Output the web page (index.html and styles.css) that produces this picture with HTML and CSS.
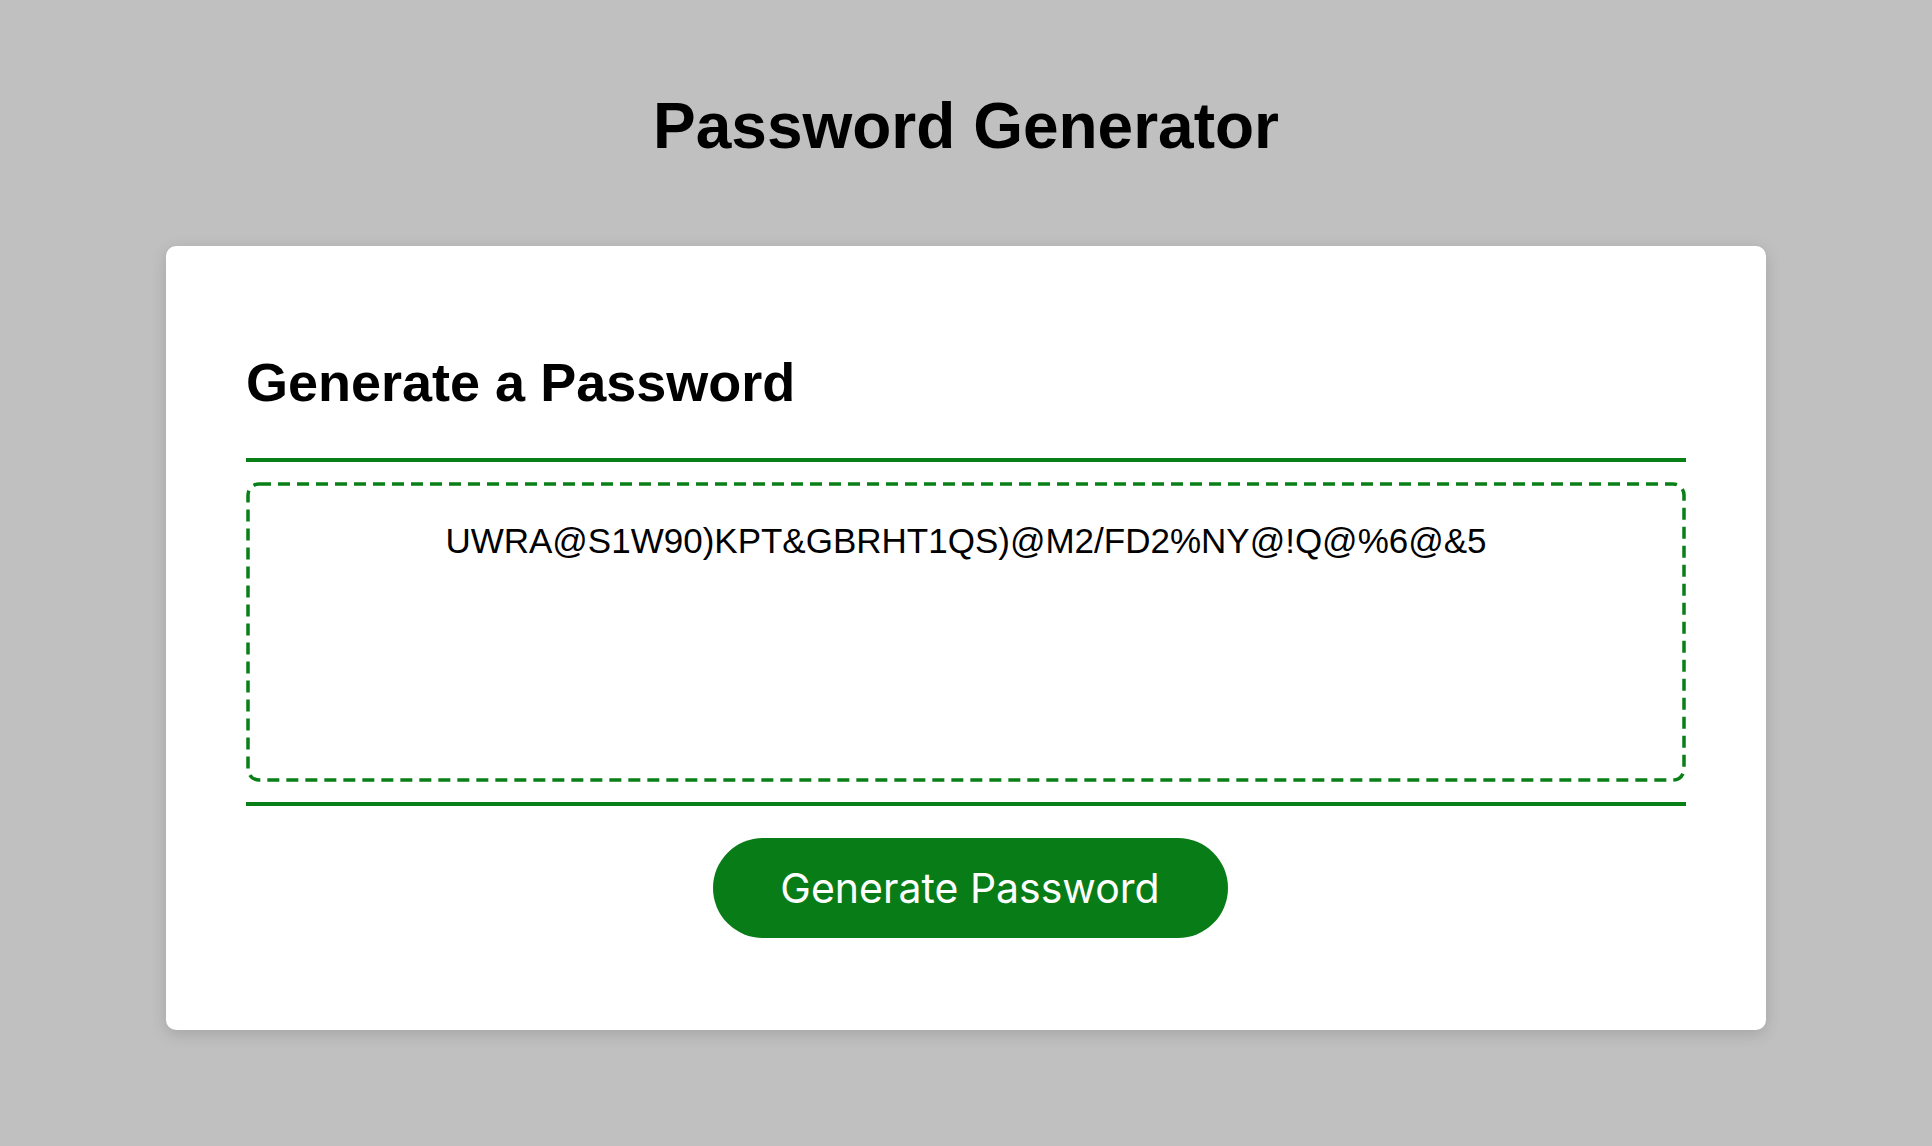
FILE: index.html
```html
<!DOCTYPE html>
<html lang="en">
<head>
<meta charset="UTF-8">
<title>Password Generator</title>
<link rel="stylesheet" href="styles.css">
</head>
<body>
<div class="wrapper">
  <header class="page-header">
    <h1 class="title">Password Generator</h1>
  </header>
  <div class="card">
    <div class="card-header">
      <h2 class="card-title">Generate a Password</h2>
    </div>
    <div class="card-body">
      <div class="password-box">
        <textarea readonly class="password" id="password" aria-label="Generated Password">UWRA@S1W90)KPT&amp;GBRHT1QS)@M2/FD2%NY@!Q@%6@&amp;5</textarea>
        <svg class="dash-frame" width="1440" height="300" viewBox="0 0 1440 300" aria-hidden="true">
          <rect x="2" y="2" width="1436" height="296" rx="11" ry="11" fill="none" stroke="#087f17" stroke-width="3.5" stroke-dasharray="12 7"></rect>
        </svg>
      </div>
    </div>
    <div class="card-footer">
      <button class="btn" id="generate">Generate Password</button>
    </div>
  </div>
</div>
</body>
</html>
```

FILE: styles.css
```css
* {
  box-sizing: border-box;
}

html, body {
  margin: 0;
  padding: 0;
}

body {
  background: #c0c0c0;
  font-family: "Liberation Sans", Arial, Helvetica, sans-serif;
  color: #000;
  min-height: 1146px;
}

.wrapper {
  padding-top: 89px;
}

.page-header {
  text-align: center;
  margin-bottom: 83px;
}

.title {
  margin: 0;
  font-size: 64px;
  line-height: 74px;
  font-weight: 700;
  color: #000;
}

.card {
  background: #fff;
  max-width: 1600px;
  margin: 0 auto;
  border-radius: 10px;
  box-shadow: rgba(0, 0, 0, 0.15) 0 4px 16px 0;
  padding: 60px 80px;
}

.card-header::after,
.card-footer::before {
  content: "";
  display: block;
  width: 100%;
  height: 4px;
  background: #087f17;
}

.card-title {
  margin: 45px 0;
  font-size: 54px;
  line-height: 62px;
  font-weight: 700;
  color: #000;
}

.card-body {
  padding: 20px 0;
}

.password-box {
  position: relative;
  height: 300px;
}

.password {
  display: block;
  width: 100%;
  height: 300px;
  margin: 0;
  padding: 36px 34px 0;
  border: none;
  border-radius: 12px;
  font-family: "Liberation Sans", Arial, Helvetica, sans-serif;
  font-size: 35px;
  line-height: 46px;
  color: #000;
  text-align: center;
  resize: none;
  overflow: hidden;
  outline: none;
  background: #fff;
}

.dash-frame {
  position: absolute;
  left: 0;
  top: 0;
  pointer-events: none;
}

.card-footer {
  text-align: center;
}

.btn {
  display: inline-block;
  width: 515px;
  height: 100px;
  margin: 32px 32px 32px 40px;
  padding: 0;
  border: none;
  border-radius: 50px;
  background: #087c17;
  color: #fff;
  font-family: Inter, "Noto Sans", sans-serif;
  font-size: 41px;
  line-height: 100px;
  cursor: pointer;
  vertical-align: top;
}
```
